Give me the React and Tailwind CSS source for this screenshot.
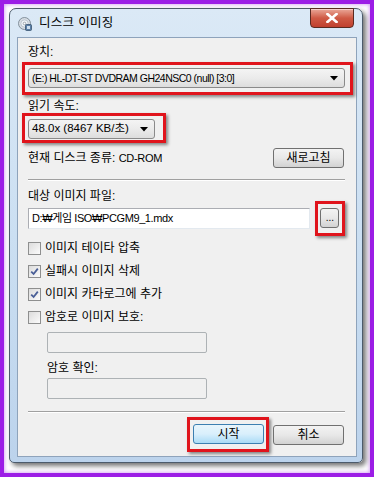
import React from "react";

const FONT = { fontFamily: '"Liberation Sans", "Noto Sans CJK KR", sans-serif' };

function Arrow() {
  return (
    <svg width="8" height="5" viewBox="0 0 8 5">
      <path d="M0 0 H8 L4 4.5 Z" fill="#000" />
    </svg>
  );
}

function Combo({ width, text = "text-[11.5px]", children }) {
  return (
    <div
      className={`${width} h-[20px] flex items-center justify-between rounded-[3px] border border-[#8a8a8a] bg-gradient-to-b from-[#f4f4f4] via-[#ebebeb] to-[#dddddd] pl-[3px] pr-[6px] ${text} leading-none text-black`}
    >
      <span>{children}</span>
      <Arrow />
    </div>
  );
}

function RedBox({ className, children }) {
  return (
    <div
      className={`border-[3px] border-[#e0141c] shadow-[2px_2px_3px_rgba(0,0,0,0.45)] ${className}`}
    >
      {children}
    </div>
  );
}

function Button({ children, width = "w-[71px]", primary }) {
  return (
    <div
      className={`${width} h-[20px] flex items-center justify-center rounded-[3px] border text-[12px] leading-none text-black ${
        primary
          ? "border-[#3c7fb1] bg-gradient-to-b from-[#e8f5fc] via-[#d9effc] to-[#a9dbf6]"
          : "border-[#707070] bg-gradient-to-b from-[#f3f3f3] via-[#e8e8e8] to-[#d2d2d2]"
      }`}
    >
      {children}
    </div>
  );
}

function Check({ checked, label }) {
  return (
    <div className="flex items-center h-[14px]">
      <div className="w-[13px] h-[13px] border border-[#8e8f8f] bg-gradient-to-br from-[#dcdcdc] to-[#fbfbfb] flex items-center justify-center">
        {checked && (
          <svg width="9" height="9" viewBox="0 0 9 9">
            <path d="M1.2 4.6 L3.6 7 L7.8 1.6" fill="none" stroke="#4a5f97" strokeWidth="1.8" />
          </svg>
        )}
      </div>
      <span className="ml-[4px] text-[12px] leading-[14px] text-black">{label}</span>
    </div>
  );
}

function Separator() {
  return (
    <div className="h-[2px] border-t border-[#a0a0a0] border-b border-b-white" />
  );
}

function DiscIcon() {
  return (
    <svg width="14" height="14" viewBox="0 0 14 14">
      <circle cx="6.5" cy="6.5" r="6" fill="#d6dde4" stroke="#6f7c88" strokeWidth="0.8" />
      <circle cx="6.5" cy="6.5" r="3.6" fill="#eef3f7" stroke="#9aa7b3" strokeWidth="0.5" />
      <circle cx="6.5" cy="6.5" r="1.3" fill="#fff" stroke="#6f7c88" strokeWidth="0.6" />
      <rect x="7.5" y="7.5" width="6" height="6" rx="1" fill="#5a7fa6" stroke="#2d4766" strokeWidth="0.7" />
      <rect x="9" y="9" width="3" height="3" fill="#cfe0f0" />
    </svg>
  );
}

export default function App() {
  return (
    <div
      style={FONT}
      className="w-[374px] h-[477px] border-[4px] border-[#9c1de6] bg-white pl-[5px] pt-[4px] shadow-[inset_0_0_4px_#c583f0]"
    >
      <div className="w-[354px] h-[455px] rounded-t-[7px] rounded-b-[5px] border border-[#4c5b6b] bg-gradient-to-b from-[#dbe9f6] via-[#cbdff2] to-[#bcd3ec] shadow-[3px_3px_5px_rgba(0,0,0,0.55)] flex flex-col pl-[7px] pr-[5px] pb-[5px]">
        {/* title bar */}
        <div className="relative h-[28px] flex items-center">
          <div className="ml-[1px] mt-[2px]">
            <DiscIcon />
          </div>
          <span className="ml-[7px] mt-[1px] text-[12.5px] text-black tracking-[0.3px]">디스크 이미징</span>
          <div className="absolute right-[3px] top-[-1px] w-[44px] h-[20px] rounded-b-[4px] border border-[#5a2a20] bg-gradient-to-b from-[#e9a899] via-[#cf5a45] to-[#c0402e] flex items-center justify-center shadow-[inset_0_1px_0_rgba(255,255,255,0.5)]">
            <svg width="12" height="10" viewBox="0 0 12 10">
              <path d="M1.5 1 L10.5 9 M10.5 1 L1.5 9" stroke="#fff" strokeWidth="2.6" strokeLinecap="square" />
            </svg>
          </div>
        </div>

        {/* client area */}
        <div className="flex-1 border border-[#8ea3bb] bg-[#f0f0f0] pl-[10px] pr-[11px] flex flex-col text-black">
          <div className="mt-[7px] h-[14px] text-[12px] leading-[14px]">장치:</div>
          <RedBox className="mt-[3px] ml-[-6px] w-[331px] h-[33px] pl-[3px] pt-[3px]">
            <Combo width="w-[317px]" text="text-[10.5px] tracking-[-0.5px]">
              (E:) HL-DT-ST DVDRAM GH24NSC0 (null) [3:0]
            </Combo>
          </RedBox>

          <div className="mt-[4px] h-[14px] text-[12px] leading-[14px]">읽기 속도:</div>
          <RedBox className="ml-[-6px] w-[144px] h-[30px] pl-[3px] pt-[3px]">
            <Combo width="w-[127px]">48.0x (8467 KB/초)</Combo>
          </RedBox>

          <div className="mt-[5px] h-[20px] flex items-center justify-between">
            <span className="text-[12px] leading-none">
              현재 디스크 종류: <span className="text-[11px] tracking-[-0.3px]">CD-ROM</span>
            </span>
            <div className="mr-[1px]">
              <Button>새로고침</Button>
            </div>
          </div>

          <div className="mt-[11px]">
            <Separator />
          </div>

          <div className="mt-[8px] h-[14px] text-[12px] leading-[14px]">대상 이미지 파일:</div>
          <div className="mt-[-2px] h-[35px] flex items-center">
            <div className="w-[287px] h-[21px] border border-[#abadb3] border-r-[#e3e9ef] border-b-[#e3e9ef] bg-white flex items-center pl-[3px] text-[11px] tracking-[-0.4px] leading-none">
              D:₩게임 ISO₩PCGM9_1.mdx
            </div>
            <RedBox className="ml-[5px] w-[30px] h-[35px] pl-[2px] pt-[4px]">
              <div className="w-[19px] h-[20px] rounded-[3px] border border-[#707070] bg-gradient-to-b from-[#f3f3f3] via-[#e8e8e8] to-[#d2d2d2] flex items-end justify-center pb-[4px] text-[10px] leading-none">
                ...
              </div>
            </RedBox>
          </div>

          <div className="mt-[5px] flex flex-col gap-[9px]">
            <Check label="이미지 테이타 압축" />
            <Check checked label="실패시 이미지 삭제" />
            <Check checked label="이미지 카타로그에 추가" />
            <Check label="암호로 이미지 보호:" />
          </div>

          <div className="mt-[8px] ml-[19px] w-[160px] h-[21px] rounded-[2px] border border-[#adb2b5] bg-[#f0f0f0]" />
          <div className="mt-[8px] ml-[19px] h-[14px] text-[12px] leading-[14px]">암호 확인:</div>
          <div className="mt-[3px] ml-[19px] w-[160px] h-[21px] rounded-[2px] border border-[#adb2b5] bg-[#f0f0f0]" />

          <div className="mt-[12px]">
            <Separator />
          </div>

          <div className="mt-[4px] flex items-center justify-end gap-[4px] pr-[1px]">
            <RedBox className="w-[82px] h-[35px] pl-[3px] pt-[4px]">
              <Button primary>시작</Button>
            </RedBox>
            <Button>취소</Button>
          </div>
        </div>
      </div>
    </div>
  );
}
